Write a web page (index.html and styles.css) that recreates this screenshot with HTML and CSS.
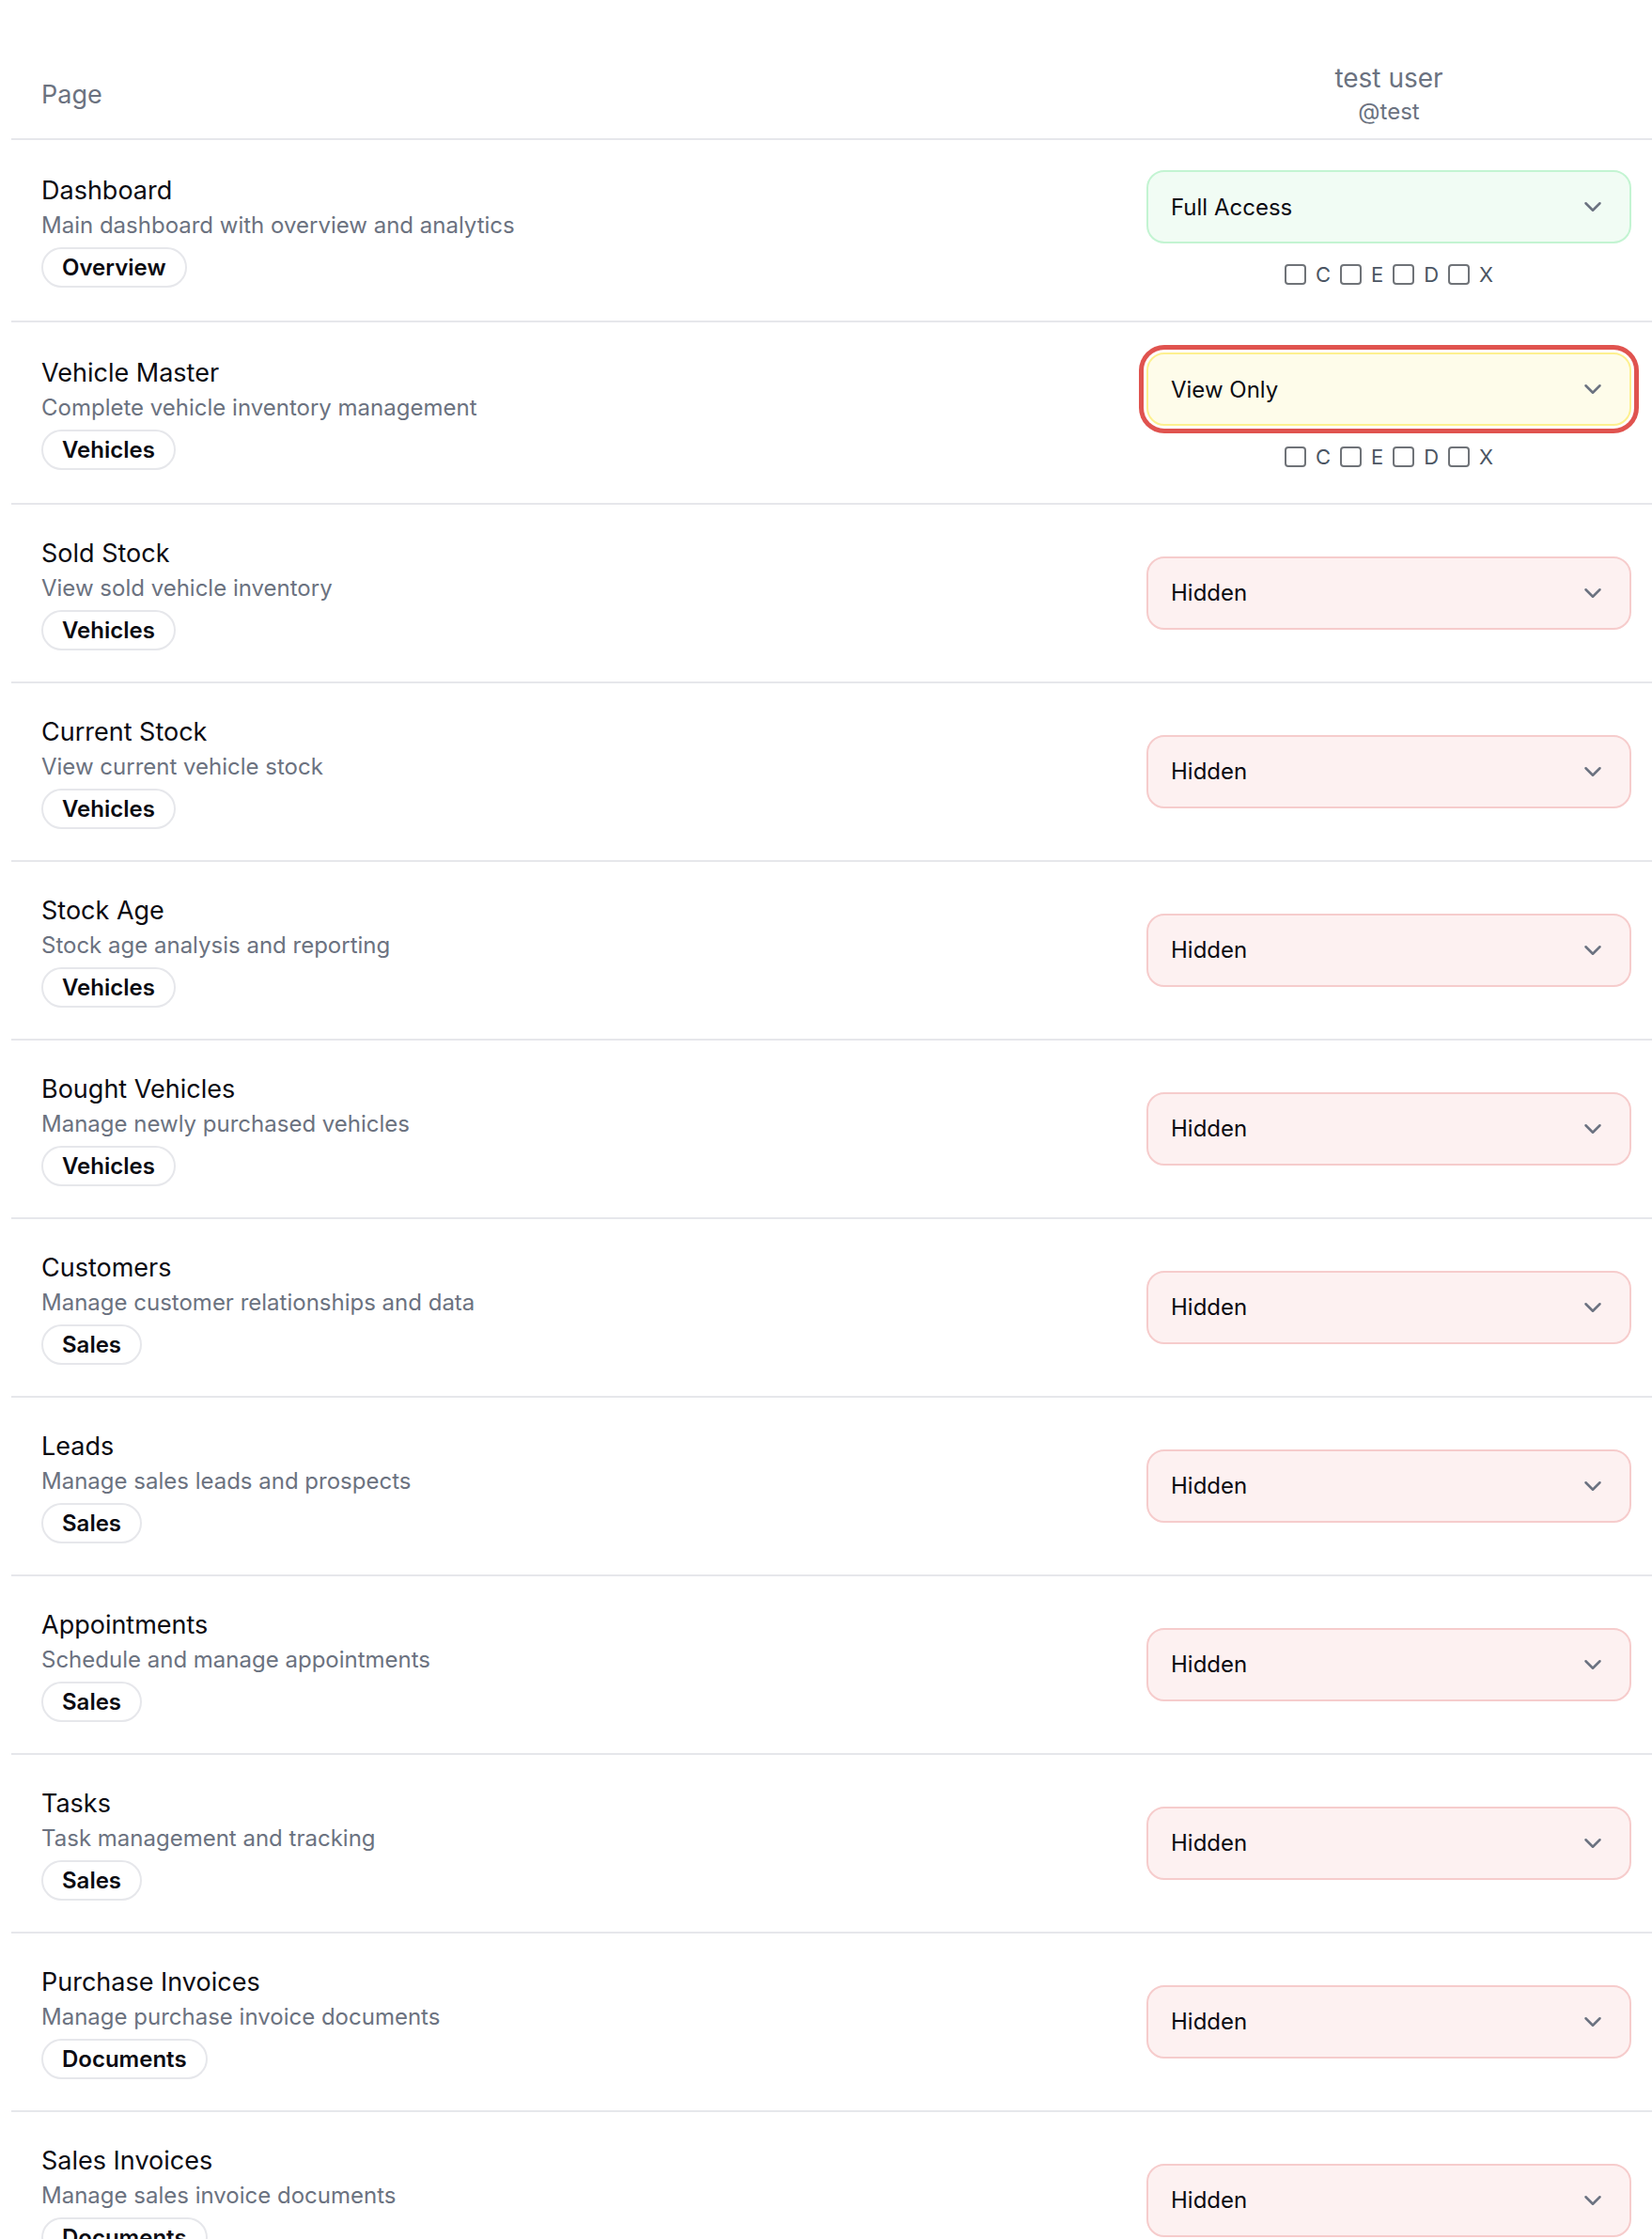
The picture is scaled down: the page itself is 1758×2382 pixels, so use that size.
FILE: index.html
```html
<!DOCTYPE html>
<html lang="en">
<head>
<meta charset="utf-8">
<title>Page permissions</title>
<link rel="stylesheet" href="styles.css">
</head>
<body>
<div class="perm-table">
  <div class="row head">
    <div class="head-page">Page</div>
    <div class="head-user">
      <div class="user-name">test user</div>
      <div class="user-handle">@test</div>
    </div>
  </div>

  <div class="row">
    <div class="page-cell">
      <div class="page-title">Dashboard</div>
      <div class="page-desc">Main dashboard with overview and analytics</div>
      <span class="badge">Overview</span>
    </div>
    <div class="access-cell">
      <div class="select full"><span>Full Access</span><svg viewBox="0 0 24 24" class="chev"><path d="m6 9 6 6 6-6"/></svg></div>
      <div class="perms">
        <label class="perm"><input type="checkbox">C</label>
        <label class="perm"><input type="checkbox">E</label>
        <label class="perm"><input type="checkbox">D</label>
        <label class="perm"><input type="checkbox">X</label>
      </div>
    </div>
  </div>

  <div class="row">
    <div class="page-cell">
      <div class="page-title">Vehicle Master</div>
      <div class="page-desc">Complete vehicle inventory management</div>
      <span class="badge">Vehicles</span>
    </div>
    <div class="access-cell">
      <div class="select view focused"><span>View Only</span><svg viewBox="0 0 24 24" class="chev"><path d="m6 9 6 6 6-6"/></svg></div>
      <div class="perms">
        <label class="perm"><input type="checkbox">C</label>
        <label class="perm"><input type="checkbox">E</label>
        <label class="perm"><input type="checkbox">D</label>
        <label class="perm"><input type="checkbox">X</label>
      </div>
    </div>
  </div>

  <div class="row">
    <div class="page-cell">
      <div class="page-title">Sold Stock</div>
      <div class="page-desc">View sold vehicle inventory</div>
      <span class="badge">Vehicles</span>
    </div>
    <div class="access-cell">
      <div class="select hidden"><span>Hidden</span><svg viewBox="0 0 24 24" class="chev"><path d="m6 9 6 6 6-6"/></svg></div>
    </div>
  </div>

  <div class="row">
    <div class="page-cell">
      <div class="page-title">Current Stock</div>
      <div class="page-desc">View current vehicle stock</div>
      <span class="badge">Vehicles</span>
    </div>
    <div class="access-cell">
      <div class="select hidden"><span>Hidden</span><svg viewBox="0 0 24 24" class="chev"><path d="m6 9 6 6 6-6"/></svg></div>
    </div>
  </div>

  <div class="row">
    <div class="page-cell">
      <div class="page-title">Stock Age</div>
      <div class="page-desc">Stock age analysis and reporting</div>
      <span class="badge">Vehicles</span>
    </div>
    <div class="access-cell">
      <div class="select hidden"><span>Hidden</span><svg viewBox="0 0 24 24" class="chev"><path d="m6 9 6 6 6-6"/></svg></div>
    </div>
  </div>

  <div class="row">
    <div class="page-cell">
      <div class="page-title">Bought Vehicles</div>
      <div class="page-desc">Manage newly purchased vehicles</div>
      <span class="badge">Vehicles</span>
    </div>
    <div class="access-cell">
      <div class="select hidden"><span>Hidden</span><svg viewBox="0 0 24 24" class="chev"><path d="m6 9 6 6 6-6"/></svg></div>
    </div>
  </div>

  <div class="row">
    <div class="page-cell">
      <div class="page-title">Customers</div>
      <div class="page-desc">Manage customer relationships and data</div>
      <span class="badge">Sales</span>
    </div>
    <div class="access-cell">
      <div class="select hidden"><span>Hidden</span><svg viewBox="0 0 24 24" class="chev"><path d="m6 9 6 6 6-6"/></svg></div>
    </div>
  </div>

  <div class="row">
    <div class="page-cell">
      <div class="page-title">Leads</div>
      <div class="page-desc">Manage sales leads and prospects</div>
      <span class="badge">Sales</span>
    </div>
    <div class="access-cell">
      <div class="select hidden"><span>Hidden</span><svg viewBox="0 0 24 24" class="chev"><path d="m6 9 6 6 6-6"/></svg></div>
    </div>
  </div>

  <div class="row">
    <div class="page-cell">
      <div class="page-title">Appointments</div>
      <div class="page-desc">Schedule and manage appointments</div>
      <span class="badge">Sales</span>
    </div>
    <div class="access-cell">
      <div class="select hidden"><span>Hidden</span><svg viewBox="0 0 24 24" class="chev"><path d="m6 9 6 6 6-6"/></svg></div>
    </div>
  </div>

  <div class="row">
    <div class="page-cell">
      <div class="page-title">Tasks</div>
      <div class="page-desc">Task management and tracking</div>
      <span class="badge">Sales</span>
    </div>
    <div class="access-cell">
      <div class="select hidden"><span>Hidden</span><svg viewBox="0 0 24 24" class="chev"><path d="m6 9 6 6 6-6"/></svg></div>
    </div>
  </div>

  <div class="row">
    <div class="page-cell">
      <div class="page-title">Purchase Invoices</div>
      <div class="page-desc">Manage purchase invoice documents</div>
      <span class="badge">Documents</span>
    </div>
    <div class="access-cell">
      <div class="select hidden"><span>Hidden</span><svg viewBox="0 0 24 24" class="chev"><path d="m6 9 6 6 6-6"/></svg></div>
    </div>
  </div>

  <div class="row">
    <div class="page-cell">
      <div class="page-title">Sales Invoices</div>
      <div class="page-desc">Manage sales invoice documents</div>
      <span class="badge">Documents</span>
    </div>
    <div class="access-cell">
      <div class="select hidden"><span>Hidden</span><svg viewBox="0 0 24 24" class="chev"><path d="m6 9 6 6 6-6"/></svg></div>
    </div>
  </div>
</div>
</body>
</html>
```
FILE: styles.css
```css
html, body {
  background: #ffffff;
}
body {
  margin: 8px 0 0 12px;
  font-family: Inter, "Noto Sans", "Liberation Sans", sans-serif;
  color: #0b0b12;
  overflow: hidden;
}
.perm-table {
  display: flex;
  flex-direction: column;
}
.row {
  display: grid;
  grid-template-columns: 1fr 516px;
  align-items: center;
  padding: 32px 22px 33px 32px;
  border-bottom: 2px solid #e6e7eb;
}
.row.head {
  padding: 55px 22px 12px 32px;
}
.head-page {
  font-size: 27px;
  line-height: 40px;
  color: #6b7280;
  padding-top: 3px;
}
.head-user {
  text-align: center;
  color: #6b7280;
}
.user-name {
  font-size: 28px;
  line-height: 40px;
}
.user-handle {
  font-size: 24px;
  line-height: 32px;
}
.page-cell {
  display: flex;
  flex-direction: column;
  align-items: flex-start;
}
.page-title {
  font-size: 27px;
  line-height: 39px;
  color: #0b0b12;
}
.page-desc {
  font-size: 24px;
  line-height: 36px;
  color: #6b7280;
}
.badge {
  margin-top: 5px;
  padding: 0 20px;
  border: 2px solid #e6e7eb;
  border-radius: 999px;
  font-size: 24px;
  line-height: 39px;
  font-weight: 600;
  color: #0b0b12;
}
.access-cell {
  display: flex;
  flex-direction: column;
  align-items: stretch;
}
.select {
  height: 78px;
  box-sizing: border-box;
  border: 2px solid;
  border-radius: 19px;
  display: flex;
  align-items: center;
  justify-content: space-between;
  padding: 0 24px 0 24px;
  font-size: 24px;
  color: #0b0b12;
}
.select.full {
  background: #f1fcf4;
  border-color: #c3f4d2;
}
.select.view {
  background: #fefcea;
  border-color: #fdf08f;
}
.select.hidden {
  background: #fdf1f1;
  border-color: #f6cccc;
}
.select.focused {
  box-shadow: 0 0 0 3px #ffffff, 0 0 0 8px #e0534f;
}
.chev {
  width: 30px;
  height: 30px;
  fill: none;
  stroke: #6b7280;
  stroke-width: 2;
  stroke-linecap: round;
  stroke-linejoin: round;
}
.perms {
  margin-top: 16px;
  height: 33px;
  display: flex;
  justify-content: center;
  align-items: center;
  gap: 10px;
}
.perm {
  display: flex;
  align-items: center;
  gap: 10px;
  font-size: 22px;
  color: #4b5563;
}
.perm input {
  appearance: none;
  -webkit-appearance: none;
  margin: 0;
  width: 23px;
  height: 22px;
  box-sizing: border-box;
  border: 2px solid #6f7378;
  border-radius: 4px;
  background: #ffffff;
}
```
